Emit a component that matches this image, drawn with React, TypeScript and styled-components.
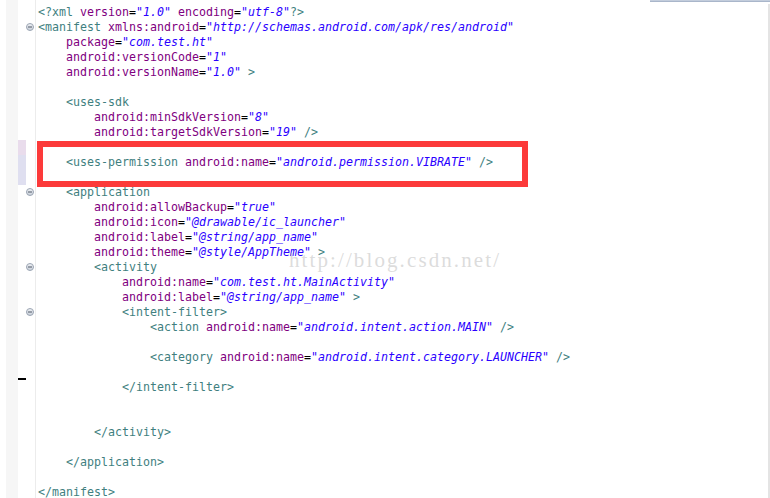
import React from "react";
import styled, { createGlobalStyle } from "styled-components";

const Global = createGlobalStyle`
  html, body { margin: 0; padding: 0; background: #ffffff; overflow: hidden; }
  #root { width: 770px; height: 498px; }
`;

type Kind = "t" | "a" | "v" | "p";
type Tok = [Kind, string];

const Editor = styled.div`
  width: 770px;
  height: 498px;
  display: flex;
  flex-direction: column;
  background: linear-gradient(
    to right,
    #ffffff 0 6px,
    #f6f6f6 6px 18px,
    #ffffff 18px 35px,
    #ececec 35px 36px,
    #ffffff 36px
  );
`;

const TopEdge = styled.div`
  height: 2px;
  display: flex;
  justify-content: flex-end;
`;

const TabStrip = styled.div`
  width: 120px;
  height: 2px;
  background: #c3cddc;
  border-bottom: 1px solid #a9b6ca;
  box-sizing: border-box;
`;

const Body = styled.div`
  flex: 1;
  display: flex;
  min-height: 0;
`;

const Lines = styled.div`
  position: relative;
  flex: 1;
  padding-top: 2.5px;
`;

const RightEdge = styled.div`
  width: 2px;
  margin-top: 2px;
  background: #e4e4e4;
`;

const Row = styled.div`
  display: flex;
  height: 15px;
`;

const Ruler = styled.div`
  width: 18px;
  flex: none;
`;

const Diff = styled.div<{ $kind?: "changed" | "added" | "deleted" }>`
  width: 8px;
  flex: none;
  box-sizing: border-box;
  background: ${(p) =>
    p.$kind === "changed" ? "#e9dcec" : p.$kind === "added" ? "#dfdff0" : "transparent"};
  border-bottom: ${(p) => (p.$kind === "deleted" ? "2px solid #000000" : "none")};
`;

const Fold = styled.div`
  width: 10px;
  flex: none;
  display: flex;
  align-items: center;
  justify-content: flex-start;
`;

const Code = styled.div`
  padding-left: 2px;
  font-family: "DejaVu Sans Mono", "Liberation Mono", monospace;
  font-size: 11.63px;
  line-height: 15px;
  white-space: pre;
  color: #000000;
`;

const Span = styled.span<{ $k: Kind }>`
  color: ${(p) =>
    p.$k === "t" ? "#3f7f7f" : p.$k === "a" ? "#7f007f" : p.$k === "v" ? "#2a00ff" : "#000000"};
  font-style: ${(p) => (p.$k === "v" ? "italic" : "normal")};
`;

const Highlight = styled.div`
  position: absolute;
  left: 37px;
  top: 139px;
  width: 491px;
  height: 46px;
  border: 6px solid #fc3a3a;
  box-sizing: border-box;
  pointer-events: none;
`;

const Watermark = styled.div`
  position: absolute;
  left: 289px;
  top: 246px;
  font-family: "Liberation Serif", serif;
  font-size: 21px;
  letter-spacing: 2.1px;
  color: rgba(185, 185, 185, 0.5);
  pointer-events: none;
  white-space: pre;
`;

const FoldIcon = () => (
  <svg width="8" height="8" viewBox="0 0 8 8">
    <defs>
      <linearGradient id="fg" x1="0" y1="0" x2="0" y2="1">
        <stop offset="0" stopColor="#f0f2f5" />
        <stop offset="1" stopColor="#c9d0da" />
      </linearGradient>
    </defs>
    <circle cx="4" cy="4" r="3.5" fill="url(#fg)" stroke="#9ba5b3" strokeWidth="1" />
    <line x1="2" y1="4" x2="6" y2="4" stroke="#4f5966" strokeWidth="1" />
  </svg>
);

const ind = (n: number): Tok => ["p", " ".repeat(n)];
const attr = (n: number, name: string, value: string, end?: string): Tok[] => {
  const r: Tok[] = [ind(n), ["a", name], ["p", "="], ["v", `"${value}"`]];
  if (end) r.push(["t", end]);
  return r;
};

type Line = { toks: Tok[]; fold?: boolean; diff?: "changed" | "added" | "deleted" };

const lines: Line[] = [
  {
    toks: [
      ["t", "<?xml"], ["p", " "], ["a", "version"], ["p", "="], ["v", '"1.0"'], ["p", " "],
      ["a", "encoding"], ["p", "="], ["v", '"utf-8"'], ["t", "?>"],
    ],
  },
  {
    fold: true,
    toks: [
      ["t", "<manifest"], ["p", " "], ["a", "xmlns:android"], ["p", "="],
      ["v", '"http://schemas.android.com/apk/res/android"'],
    ],
  },
  { toks: attr(4, "package", "com.test.ht") },
  { toks: attr(4, "android:versionCode", "1") },
  { toks: attr(4, "android:versionName", "1.0", " >") },
  { toks: [] },
  { toks: [ind(4), ["t", "<uses-sdk"]] },
  { toks: attr(8, "android:minSdkVersion", "8") },
  { toks: attr(8, "android:targetSdkVersion", "19", " />") },
  { toks: [], diff: "changed" },
  {
    diff: "added",
    toks: [
      ind(4), ["t", "<uses-permission"], ["p", " "], ["a", "android:name"], ["p", "="],
      ["v", '"android.permission.VIBRATE"'], ["t", " />"],
    ],
  },
  { toks: [], diff: "added" },
  { fold: true, toks: [ind(4), ["t", "<application"]] },
  { toks: attr(8, "android:allowBackup", "true") },
  { toks: attr(8, "android:icon", "@drawable/ic_launcher") },
  { toks: attr(8, "android:label", "@string/app_name") },
  { toks: attr(8, "android:theme", "@style/AppTheme", " >") },
  { fold: true, toks: [ind(8), ["t", "<activity"]] },
  { toks: attr(12, "android:name", "com.test.ht.MainActivity") },
  { toks: attr(12, "android:label", "@string/app_name", " >") },
  { fold: true, toks: [ind(12), ["t", "<intent-filter>"]] },
  {
    toks: [
      ind(16), ["t", "<action"], ["p", " "], ["a", "android:name"], ["p", "="],
      ["v", '"android.intent.action.MAIN"'], ["t", " />"],
    ],
  },
  { toks: [] },
  {
    toks: [
      ind(16), ["t", "<category"], ["p", " "], ["a", "android:name"], ["p", "="],
      ["v", '"android.intent.category.LAUNCHER"'], ["t", " />"],
    ],
  },
  { toks: [], diff: "deleted" },
  { toks: [ind(12), ["t", "</intent-filter>"]] },
  { toks: [] },
  { toks: [] },
  { toks: [ind(8), ["t", "</activity>"]] },
  { toks: [] },
  { toks: [ind(4), ["t", "</application>"]] },
  { toks: [] },
  { toks: [["t", "</manifest>"]] },
];

export default function App() {
  return (
    <>
      <Global />
      <Editor>
        <TopEdge>
          <TabStrip />
        </TopEdge>
        <Body>
          <Lines>
            {lines.map((l, i) => (
              <Row key={i}>
                <Ruler />
                <Diff $kind={l.diff} />
                <Fold>{l.fold ? <FoldIcon /> : null}</Fold>
                <Code>
                  {l.toks.length === 0
                    ? " "
                    : l.toks.map((t, j) => (
                        <Span key={j} $k={t[0]}>
                          {t[1]}
                        </Span>
                      ))}
                </Code>
              </Row>
            ))}
            <Highlight />
            <Watermark>http://blog.csdn.net/</Watermark>
          </Lines>
          <RightEdge />
        </Body>
      </Editor>
    </>
  );
}
